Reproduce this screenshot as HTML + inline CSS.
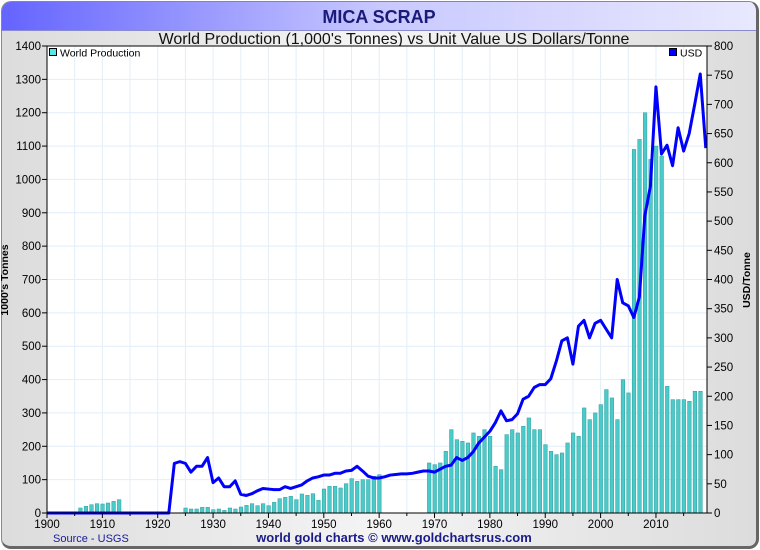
<!DOCTYPE html>
<html><head><meta charset="utf-8"><style>
body{margin:0;width:760px;height:550px;overflow:hidden;background:#fff;font-family:"Liberation Sans",sans-serif}
#f{position:absolute;left:1px;top:1px;width:754px;height:544px;border:1px solid #888;border-right:3px solid #666;border-bottom:3px solid #666;border-radius:10px;background:linear-gradient(90deg,#dcdcdc,#f4f4f4 50%,#dcdcdc);overflow:hidden}
#t{position:absolute;left:0;top:0;width:754px;height:28px;background:linear-gradient(90deg,#6464ff,#c8c8ff 50%,#e8e8ff);border-bottom:1px solid #8a8ad0;text-align:center;font:bold 18px "Liberation Sans",sans-serif;color:#1a1a7a;line-height:30px}
svg{position:absolute;left:0;top:0}
</style></head><body>
<div id="f"><div id="t">MICA SCRAP</div></div>
<svg id="s" width="760" height="550" font-family="Liberation Sans, sans-serif"></svg>
<script>
var L=47,R=707,T=46,B=513;
function X(y){return 47+(y-1900)*5.536}
function YL(v){return B-v*(B-T)/1400}
function YR(v){return B-v*(B-T)/800}
var prod={1906:15,1907:20,1908:25,1909:28,1910:27,1911:30,1912:35,1913:40,1925:15,1926:12,1927:12,1928:17,1929:17,1930:10,1931:12,1932:8,1933:15,1934:12,1935:18,1936:23,1937:28,1938:22,1939:28,1940:22,1941:32,1942:43,1943:47,1944:50,1945:40,1946:57,1947:53,1948:58,1949:38,1950:72,1951:80,1952:80,1953:75,1954:88,1955:103,1956:95,1957:100,1958:100,1959:110,1960:115,1969:150,1970:145,1971:150,1972:185,1973:250,1974:220,1975:215,1976:210,1977:240,1978:230,1979:250,1980:230,1981:140,1982:130,1983:235,1984:250,1985:240,1986:260,1987:285,1988:250,1989:250,1990:205,1991:185,1992:175,1993:180,1994:210,1995:240,1996:230,1997:315,1998:280,1999:300,2000:325,2001:370,2002:345,2003:280,2004:400,2005:360,2006:1090,2007:1120,2008:1200,2009:1060,2010:1100,2011:1070,2012:380,2013:340,2014:340,2015:340,2016:335,2017:365,2018:365};
var usd={1922:0,1923:85,1924:88,1925:85,1926:70,1927:80,1928:80,1929:95,1930:52,1931:60,1932:45,1933:45,1934:55,1935:32,1936:30,1937:33,1938:38,1939:42,1940:41,1941:40,1942:40,1943:45,1944:42,1945:45,1946:48,1947:55,1948:60,1949:62,1950:65,1951:65,1952:68,1953:68,1954:72,1955:73,1956:80,1957:72,1958:63,1959:60,1960:60,1961:62,1962:65,1963:66,1964:67,1965:67,1966:68,1967:70,1968:72,1969:72,1970:70,1971:75,1972:80,1973:82,1974:95,1975:90,1976:95,1977:105,1978:120,1979:130,1980:140,1981:155,1982:175,1983:158,1984:160,1985:170,1986:195,1987:200,1988:215,1989:220,1990:220,1991:230,1992:260,1993:295,1994:300,1995:255,1996:320,1997:330,1998:300,1999:325,2000:330,2001:315,2002:300,2003:400,2004:360,2005:355,2006:335,2007:370,2008:510,2009:560,2010:730,2011:615,2012:630,2013:595,2014:660,2015:620,2016:650,2017:700,2018:752,2019:625};
var h='<text x="394" y="44" font-size="16" text-anchor="middle" fill="#111">World Production (1,000\'s Tonnes) vs Unit Value US Dollars/Tonne</text>';
h+='<rect x="'+L+'" y="'+T+'" width="'+(R-L)+'" height="'+(B-T)+'" fill="#fff"/>';
for(var y=1900;y<=2019;y+=5)h+='<line x1="'+X(y)+'" y1="'+T+'" x2="'+X(y)+'" y2="'+B+'" stroke="#e2eef8"/>';
for(var v=100;v<1400;v+=100)h+='<line x1="'+L+'" y1="'+YL(v)+'" x2="'+R+'" y2="'+YL(v)+'" stroke="#e2eef8"/>';
for(var k in prod){var x=X(+k)-1.6,yy=YL(prod[k]);h+='<rect x="'+x+'" y="'+yy+'" width="3.6" height="'+(B-yy)+'" fill="#4ccaca" stroke="#2aa0a0" stroke-width="0.5"/>';}
var p='M'+X(1900)+' '+B+' L';for(var k in usd)p+=X(+k)+' '+YR(usd[k])+' ';
h+='<path d="'+p+'" fill="none" stroke="#0000ff" stroke-width="3" stroke-linejoin="round"/>';
h+='<rect x="'+L+'" y="'+T+'" width="'+(R-L)+'" height="'+(B-T)+'" fill="none" stroke="#000"/>';
for(var v=0;v<=1400;v+=100){h+='<line x1="42" x2="47" y1="'+YL(v)+'" y2="'+YL(v)+'" stroke="#000"/><text x="41" y="'+(YL(v)+4)+'" font-size="11.5" text-anchor="end">'+v+'</text>';}
for(var v=0;v<=800;v+=50){h+='<line x1="707" x2="712" y1="'+YR(v)+'" y2="'+YR(v)+'" stroke="#000"/><text x="714" y="'+(YR(v)+4)+'" font-size="11.5">'+v+'</text>';}
for(var y=1900;y<=2010;y+=10){h+='<line x1="'+X(y)+'" x2="'+X(y)+'" y1="513" y2="518" stroke="#000"/><text x="'+X(y)+'" y="528" font-size="11.5" text-anchor="middle">'+y+'</text>';}
for(var y=1905;y<=2015;y+=10)h+='<line x1="'+X(y)+'" x2="'+X(y)+'" y1="513" y2="516" stroke="#000"/>';
h+='<rect x="49.5" y="48.5" width="7" height="7" fill="#55e8e8" stroke="#000"/><text x="60" y="56.5" font-size="10.5">World Production</text>';
h+='<rect x="669.5" y="48.5" width="7" height="7" fill="#0000ff" stroke="#000"/><text x="680" y="56.5" font-size="10.5">USD</text>';
h+='<text transform="translate(8,280) rotate(-90)" font-size="10.5" font-weight="bold" text-anchor="middle">1000\'s Tonnes</text>';
h+='<text transform="translate(750,280) rotate(-90)" font-size="10.5" font-weight="bold" text-anchor="middle">USD/Tonne</text>';
h+='<text x="53" y="542" font-size="11" fill="#1a1a9a">Source - USGS</text>';
h+='<text x="394" y="542" font-size="13" font-weight="bold" fill="#1a1a8a" text-anchor="middle">world gold charts © www.goldchartsrus.com</text>';
document.getElementById('s').innerHTML=h;
</script>
</body></html>
